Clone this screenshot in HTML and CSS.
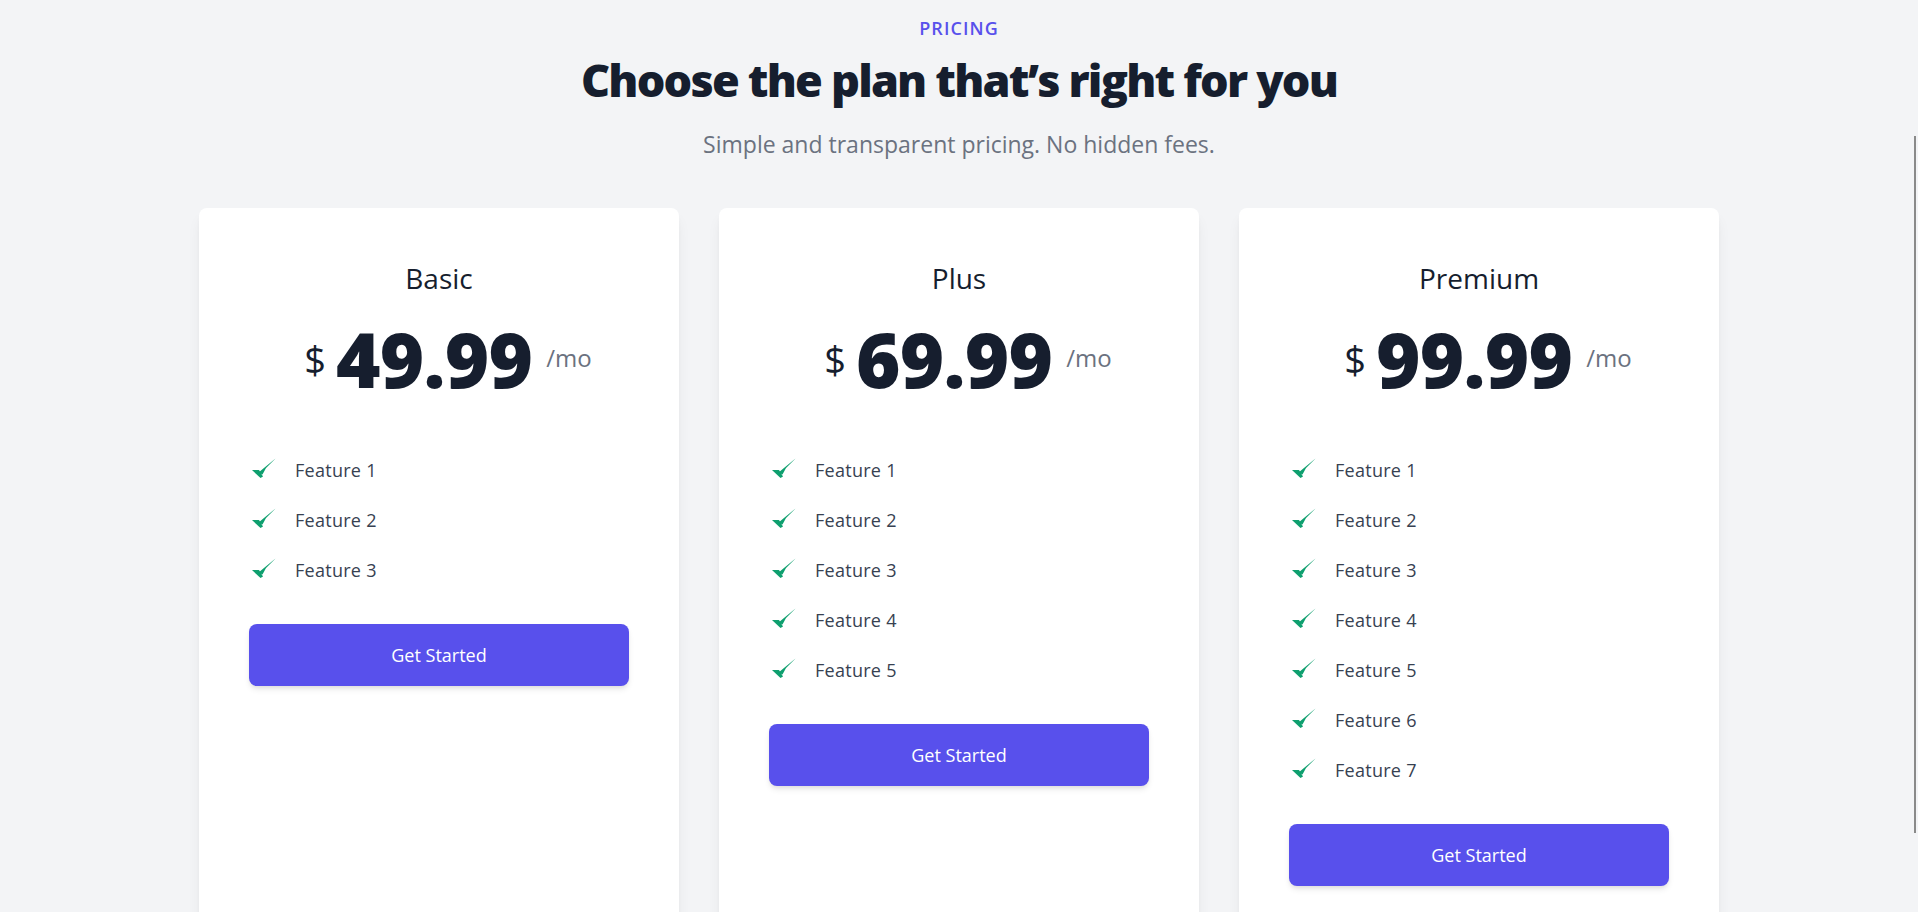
FILE: index.html
```html
<!DOCTYPE html>
<html lang="en">
<head>
<meta charset="utf-8">
<title>Pricing</title>
<link rel="stylesheet" href="styles.css">
</head>
<body>
<div class="page">
  <header class="intro">
    <p class="eyebrow">Pricing</p>
    <h1 class="headline">Choose the plan that’s right for you</h1>
    <p class="lead">Simple and transparent pricing. No hidden fees.</p>
  </header>

  <section class="plans">
    <article class="plan">
      <h2 class="plan-name">Basic</h2>
      <div class="price">
        <span class="currency">$</span>
        <span class="amount">49.99</span>
        <span class="period">/mo</span>
      </div>
      <ul class="features">
        <li class="feature"><svg class="check" viewBox="0 0 24 20"><polygon points="0,12 7,12 11,18.5 8.5,20"/><polygon points="6.5,14.5 23.5,0.5 14,10 10.5,16.5"/></svg><span>Feature 1</span></li>
        <li class="feature"><svg class="check" viewBox="0 0 24 20"><polygon points="0,12 7,12 11,18.5 8.5,20"/><polygon points="6.5,14.5 23.5,0.5 14,10 10.5,16.5"/></svg><span>Feature 2</span></li>
        <li class="feature"><svg class="check" viewBox="0 0 24 20"><polygon points="0,12 7,12 11,18.5 8.5,20"/><polygon points="6.5,14.5 23.5,0.5 14,10 10.5,16.5"/></svg><span>Feature 3</span></li>
      </ul>
      <button class="cta" type="button">Get Started</button>
    </article>

    <article class="plan">
      <h2 class="plan-name">Plus</h2>
      <div class="price">
        <span class="currency">$</span>
        <span class="amount">69.99</span>
        <span class="period">/mo</span>
      </div>
      <ul class="features">
        <li class="feature"><svg class="check" viewBox="0 0 24 20"><polygon points="0,12 7,12 11,18.5 8.5,20"/><polygon points="6.5,14.5 23.5,0.5 14,10 10.5,16.5"/></svg><span>Feature 1</span></li>
        <li class="feature"><svg class="check" viewBox="0 0 24 20"><polygon points="0,12 7,12 11,18.5 8.5,20"/><polygon points="6.5,14.5 23.5,0.5 14,10 10.5,16.5"/></svg><span>Feature 2</span></li>
        <li class="feature"><svg class="check" viewBox="0 0 24 20"><polygon points="0,12 7,12 11,18.5 8.5,20"/><polygon points="6.5,14.5 23.5,0.5 14,10 10.5,16.5"/></svg><span>Feature 3</span></li>
        <li class="feature"><svg class="check" viewBox="0 0 24 20"><polygon points="0,12 7,12 11,18.5 8.5,20"/><polygon points="6.5,14.5 23.5,0.5 14,10 10.5,16.5"/></svg><span>Feature 4</span></li>
        <li class="feature"><svg class="check" viewBox="0 0 24 20"><polygon points="0,12 7,12 11,18.5 8.5,20"/><polygon points="6.5,14.5 23.5,0.5 14,10 10.5,16.5"/></svg><span>Feature 5</span></li>
      </ul>
      <button class="cta" type="button">Get Started</button>
    </article>

    <article class="plan">
      <h2 class="plan-name">Premium</h2>
      <div class="price">
        <span class="currency">$</span>
        <span class="amount">99.99</span>
        <span class="period">/mo</span>
      </div>
      <ul class="features">
        <li class="feature"><svg class="check" viewBox="0 0 24 20"><polygon points="0,12 7,12 11,18.5 8.5,20"/><polygon points="6.5,14.5 23.5,0.5 14,10 10.5,16.5"/></svg><span>Feature 1</span></li>
        <li class="feature"><svg class="check" viewBox="0 0 24 20"><polygon points="0,12 7,12 11,18.5 8.5,20"/><polygon points="6.5,14.5 23.5,0.5 14,10 10.5,16.5"/></svg><span>Feature 2</span></li>
        <li class="feature"><svg class="check" viewBox="0 0 24 20"><polygon points="0,12 7,12 11,18.5 8.5,20"/><polygon points="6.5,14.5 23.5,0.5 14,10 10.5,16.5"/></svg><span>Feature 3</span></li>
        <li class="feature"><svg class="check" viewBox="0 0 24 20"><polygon points="0,12 7,12 11,18.5 8.5,20"/><polygon points="6.5,14.5 23.5,0.5 14,10 10.5,16.5"/></svg><span>Feature 4</span></li>
        <li class="feature"><svg class="check" viewBox="0 0 24 20"><polygon points="0,12 7,12 11,18.5 8.5,20"/><polygon points="6.5,14.5 23.5,0.5 14,10 10.5,16.5"/></svg><span>Feature 5</span></li>
        <li class="feature"><svg class="check" viewBox="0 0 24 20"><polygon points="0,12 7,12 11,18.5 8.5,20"/><polygon points="6.5,14.5 23.5,0.5 14,10 10.5,16.5"/></svg><span>Feature 6</span></li>
        <li class="feature"><svg class="check" viewBox="0 0 24 20"><polygon points="0,12 7,12 11,18.5 8.5,20"/><polygon points="6.5,14.5 23.5,0.5 14,10 10.5,16.5"/></svg><span>Feature 7</span></li>
      </ul>
      <button class="cta" type="button">Get Started</button>
    </article>
  </section>
</div>
<div class="scroll-thumb" aria-hidden="true"></div>
</body>
</html>
```
FILE: styles.css
```css
html {
  scrollbar-width: none;
  overflow: hidden;
}
html::-webkit-scrollbar { display: none; }

body {
  margin: 0;
  background: #f3f4f6;
  font-family: "Open Sans", "Noto Sans", "Liberation Sans", sans-serif;
  color: #161e2e;
}

.page {
  padding-top: 14px;
}

.intro {
  text-align: center;
}

.eyebrow {
  margin: 0;
  font-size: 18px;
  line-height: 28px;
  font-weight: 600;
  letter-spacing: 0.06em;
  text-transform: uppercase;
  color: #5850ec;
}

.headline {
  margin: 12px 0 0;
  font-size: 45px;
  line-height: 52px;
  font-weight: 800;
  letter-spacing: -0.04em;
  color: #161e2e;
}

.lead {
  margin: 22px 0 0;
  font-size: 23px;
  line-height: 32px;
  color: #6b7280;
}

.plans {
  display: grid;
  grid-template-columns: repeat(3, 480px);
  gap: 40px;
  justify-content: center;
  margin-top: 48px;
  padding-bottom: 40px;
}

.plan {
  background: #ffffff;
  border-radius: 8px;
  box-shadow: 0 10px 15px -3px rgba(0, 0, 0, 0.08), 0 4px 6px -2px rgba(0, 0, 0, 0.04);
  padding: 52px 50px 50px;
  display: flex;
  flex-direction: column;
  align-items: stretch;
}

.plan-name {
  margin: 0;
  text-align: center;
  font-size: 28px;
  line-height: 36px;
  font-weight: 400;
  color: #161e2e;
}

.price {
  display: flex;
  align-items: center;
  justify-content: center;
  margin-top: 21px;
  height: 84px;
}

.currency {
  font-size: 38px;
  line-height: 1;
  padding: 0 10px 0 18px;
  color: #161e2e;
}

.amount {
  font-size: 76px;
  line-height: 1;
  font-weight: 800;
  letter-spacing: -0.01em;
  color: #161e2e;
}

.period {
  margin-left: 14px;
  font-size: 24px;
  line-height: 1;
  color: #6b7280;
  padding-bottom: 2px;
}

.features {
  list-style: none;
  margin: 44px 0 0;
  padding: 0 0 0 3px;
}

.feature {
  display: flex;
  align-items: center;
  height: 50px;
  font-size: 18px;
  letter-spacing: 0.015em;
  color: #374151;
}

.check {
  width: 24px;
  height: 20px;
  fill: #0e9f6e;
  margin-right: 19px;
  flex: none;
  position: relative;
  top: -2px;
}

.cta {
  margin-top: 29px;
  height: 62px;
  border: 0;
  border-radius: 8px;
  background: #5850ec;
  color: #ffffff;
  font-family: inherit;
  font-size: 18px;
  box-shadow: 0 4px 6px -1px rgba(0, 0, 0, 0.1), 0 2px 4px -1px rgba(0, 0, 0, 0.06);
  cursor: pointer;
}

.scroll-thumb {
  position: fixed;
  right: 2px;
  top: 136px;
  width: 2px;
  height: 697px;
  background: #8a8a8a;
}
```
